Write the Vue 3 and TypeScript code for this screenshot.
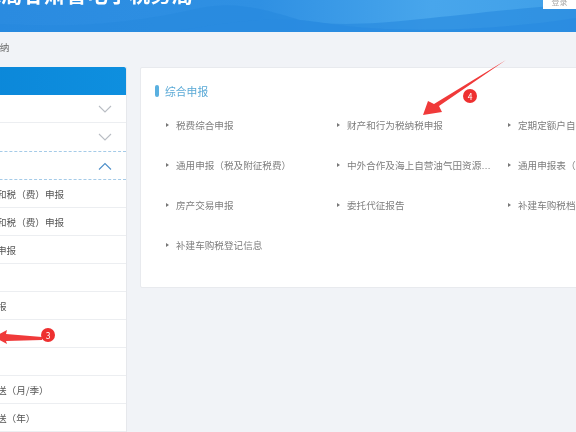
<script setup lang="ts">
interface SideRow {
  id: number
  text: string
  kind: 'head' | 'open' | 'item'
}

const sideRows: SideRow[] = [
  { id: 1, text: '', kind: 'head' },
  { id: 2, text: '', kind: 'head' },
  { id: 3, text: '', kind: 'open' },
  { id: 4, text: '增值税和税（费）申报', kind: 'item' },
  { id: 5, text: '消费税和税（费）申报', kind: 'item' },
  { id: 6, text: '附加税申报', kind: 'item' },
  { id: 7, text: '', kind: 'item' },
  { id: 8, text: '年度申报', kind: 'item' },
  { id: 9, text: '', kind: 'item' },
  { id: 10, text: '', kind: 'item' },
  { id: 11, text: '财报报送（月/季）', kind: 'item' },
  { id: 12, text: '财报报送（年）', kind: 'item' }
]

const links: string[] = [
  '税费综合申报',
  '财产和行为税纳税申报',
  '定期定额户自行申报',
  '通用申报（税及附征税费）',
  '中外合作及海上自营油气田资源税申报',
  '通用申报表（财产和行为税）',
  '房产交易申报',
  '委托代征报告',
  '补建车购税档案信息',
  '补建车购税登记信息'
]
</script>

<template>
  <div class="page">
    <header class="top">
      <svg class="waves" viewBox="0 0 576 32" preserveAspectRatio="none" aria-hidden="true">
        <path d="M0 24 C70 28 130 24 200 8 C235 1 260 8 300 20 C360 32 440 14 576 4 V32 H0 Z" fill="#2789de" opacity="0.6" />
        <path d="M170 32 C230 22 280 14 330 24 C400 34 500 30 576 18 V32 Z" fill="#2a8be0" opacity="0.75" />
      </svg>
      <h1 class="site">国家税务总局甘肃省电子税务局</h1>
      <div class="user">登录</div>
    </header>

    <div class="crumb">申报缴纳</div>

    <main class="body">
      <aside class="side">
        <div class="side-title"></div>
        <div
          v-for="row in sideRows"
          :key="row.id"
          class="side-row"
          :class="row.kind"
        >
          <span>{{ row.text }}</span>
          <svg v-if="row.kind !== 'item'" class="chev" viewBox="0 0 14 8" aria-hidden="true">
            <path :d="row.kind === 'open' ? 'M1 7.5 L7 1.5 L13 7.5' : 'M1 1 L7 7 L13 1'" fill="none" stroke-width="1.1" />
          </svg>
        </div>
      </aside>

      <section class="card">
        <h2 class="card-title">综合申报</h2>
        <ul class="grid">
          <li v-for="link in links" :key="link" class="link">
            <i class="tri"></i>
            <span class="label">{{ link }}</span>
          </li>
        </ul>
      </section>
    </main>

    <svg class="marks" viewBox="0 0 576 432" aria-hidden="true">
      <polygon points="506,60 439,106 442,112 423,115 428,101 434,104" fill="#f03a3a" />
      <polygon points="-6,337 7,330 6,334 42,337 42,340 6,341 7,344" fill="#f03a3a" />
      <circle cx="470" cy="96" r="7" fill="#ee3030" />
      <circle cx="48" cy="335" r="7" fill="#ee3030" />
    </svg>
    <span class="num n4">4</span>
    <span class="num n3">3</span>
  </div>
</template>

<style>
html,
body {
  margin: 0;
  background: #f1f3f7;
}
</style>

<style scoped>
.page {
  position: relative;
  width: 576px;
  height: 432px;
  overflow: hidden;
  background: #f1f3f7;
  font-family: "Noto Sans CJK SC", "Liberation Sans", sans-serif;
  filter: blur(0.35px);
}
.top {
  position: relative;
  height: 32px;
  overflow: hidden;
  display: flex;
  justify-content: space-between;
  align-items: flex-end;
  background: linear-gradient(90deg, #2a8be0 0%, #2f90e3 45%, #48a6ec 75%, #3f9fe8 100%);
}
.waves {
  position: absolute;
  inset: 0;
  width: 100%;
  height: 100%;
}
.site {
  position: relative;
  margin: 0 0 28px -105px;
  font-size: 21px;
  line-height: 21px;
  letter-spacing: 0.3px;
  font-weight: 700;
  color: #fff;
  white-space: nowrap;
}
.user {
  position: relative;
  align-self: flex-start;
  box-sizing: border-box;
  width: 33px;
  height: 9px;
  background: #fff;
  color: #aaa;
  font-size: 8px;
  line-height: 3px;
  text-align: center;
  overflow: hidden;
}
.crumb {
  height: 35px;
  margin-left: -29px;
  font-size: 9.6px;
  line-height: 30px;
  color: #666;
}
.body {
  display: flex;
  align-items: flex-start;
  gap: 13px;
}
.side {
  flex: none;
  box-sizing: border-box;
  width: 167px;
  margin-left: -40px;
  background: #fff;
  border-right: 1px solid #e6e8ec;
}
.side-title {
  height: 28px;
  background: linear-gradient(90deg, #0b86d8, #0e8fdf);
  border-radius: 0 2px 0 0;
}
.side-row {
  box-sizing: border-box;
  height: 28px;
  padding: 0 14px 0 8.2px;
  display: flex;
  align-items: center;
  justify-content: space-between;
  font-size: 9.6px;
  color: #555;
  border-bottom: 1px solid #eceef1;
}
.side-row:nth-of-type(3) {
  height: 29px;
  border-bottom: 1px dashed #a5cbe8;
}
.side-row.open {
  border-bottom: 1px dashed #a5cbe8;
}
.chev {
  width: 14px;
  height: 8px;
  stroke: #b9bdc4;
}
.open .chev {
  stroke: #4d8fc9;
}
.card {
  flex: none;
  box-sizing: border-box;
  width: 480px;
  height: 221px;
  padding: 14px 14px;
  background: #fff;
  border: 1px solid #e8eaee;
  border-radius: 2px;
}
.card-title {
  display: flex;
  align-items: center;
  gap: 6px;
  margin: 0;
  height: 17px;
  font-size: 10.8px;
  font-weight: 400;
  color: #5aa9d6;
}
.card-title::before {
  content: "";
  width: 4px;
  height: 12px;
  border-radius: 2px;
  background: #5ab0e0;
}
.grid {
  display: grid;
  grid-template-columns: repeat(3, 171px);
  grid-auto-rows: 40px;
  margin: 6px 0 0;
  padding: 0 0 0 11px;
  list-style: none;
}
.link {
  display: flex;
  align-items: center;
  gap: 7px;
  height: 40px;
  font-size: 9.6px;
  color: #7e7e7e;
}
.tri {
  flex: none;
  width: 0;
  height: 0;
  border-left: 3px solid #777;
  border-top: 2.5px solid transparent;
  border-bottom: 2.5px solid transparent;
}
.label {
  width: 146px;
  overflow: hidden;
  white-space: nowrap;
  text-overflow: ellipsis;
  font-family: "Liberation Sans", "Noto Sans CJK SC", sans-serif;
}
.marks {
  position: absolute;
  inset: 0;
  width: 576px;
  height: 432px;
  pointer-events: none;
}
.num {
  position: absolute;
  width: 14px;
  text-align: center;
  color: #fff;
  font-size: 8.5px;
  line-height: 14px;
}
.n4 {
  left: 463px;
  top: 89px;
}
.n3 {
  left: 41px;
  top: 328px;
}
</style>
